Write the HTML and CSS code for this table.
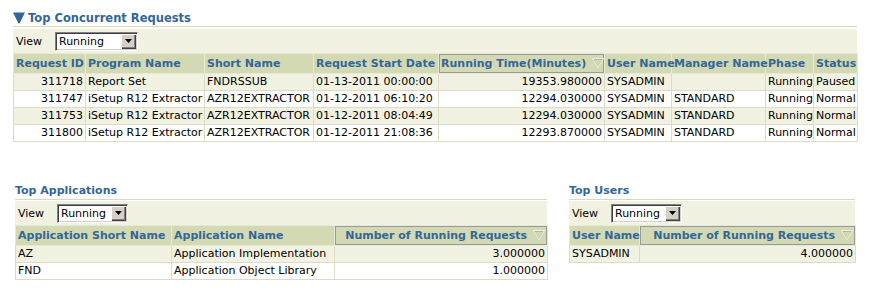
FILE: index.html
```html
<!DOCTYPE html>
<html>
<head>
    <title>Concurrent Requests</title>
    <link rel="stylesheet" href="styles.css">
</head>
<body>
    <div class="region">
        <h2 class="hdr"><svg class="disclose" width="12" height="12" viewBox="0 0 12 12"><path d="M0 0.5h12L6.5 11.5h-1z" fill="#336699"/></svg>Top Concurrent Requests</h2>
        <div class="bar">
            <label>View</label>
            <span class="select wide">Running<span class="btn"><svg width="7" height="4" viewBox="0 0 7 4"><path d="M0 0h7L3.5 4z" fill="#000"/></svg></span></span>
        </div>
        <table class="grid">
            <colgroup>
                <col style="width:72px"><col style="width:119px"><col style="width:109px"><col style="width:125px"><col style="width:166px"><col style="width:67px"><col style="width:94px"><col style="width:48px"><col style="width:44px">
            </colgroup>
            <tr>
                <th>Request ID</th><th>Program Name</th><th>Short Name</th><th>Request Start Date</th>
                <th class="sorted">Running Time(Minutes) <svg class="sort" width="12" height="10" viewBox="0 0 12 10"><path d="M1.5 1.5h9L6 9z" fill="none" stroke="#b4b898"/><path d="M0.5 0.5h11L6 9.5z" fill="none" stroke="#f0f0e4"/></svg></th>
                <th>User Name</th><th>Manager Name</th><th>Phase</th><th>Status</th>
            </tr>
            <tr class="odd">
                <td class="num">311718</td><td>Report Set</td><td>FNDRSSUB</td><td>01-13-2011 00:00:00</td><td class="num">19353.980000</td><td>SYSADMIN</td><td></td><td>Running</td><td>Paused</td>
            </tr>
            <tr>
                <td class="num">311747</td><td>iSetup R12 Extractor</td><td>AZR12EXTRACTOR</td><td>01-12-2011 06:10:20</td><td class="num">12294.030000</td><td>SYSADMIN</td><td>STANDARD</td><td>Running</td><td>Normal</td>
            </tr>
            <tr class="odd">
                <td class="num">311753</td><td>iSetup R12 Extractor</td><td>AZR12EXTRACTOR</td><td>01-12-2011 08:04:49</td><td class="num">12294.030000</td><td>SYSADMIN</td><td>STANDARD</td><td>Running</td><td>Normal</td>
            </tr>
            <tr>
                <td class="num">311800</td><td>iSetup R12 Extractor</td><td>AZR12EXTRACTOR</td><td>01-12-2011 21:08:36</td><td class="num">12293.870000</td><td>SYSADMIN</td><td>STANDARD</td><td>Running</td><td>Normal</td>
            </tr>
        </table>
    </div>

    <div class="lower">
        <div class="region apps">
            <h2 class="hdr sub">Top Applications</h2>
            <div class="bar">
                <label>View</label>
                <span class="select">Running<span class="btn"><svg width="7" height="4" viewBox="0 0 7 4"><path d="M0 0h7L3.5 4z" fill="#000"/></svg></span></span>
            </div>
            <table class="grid">
                <colgroup><col style="width:156px"><col style="width:163px"><col style="width:213px"></colgroup>
                <tr>
                    <th>Application Short Name</th><th>Application Name</th>
                    <th class="sorted">Number of Running Requests <svg class="sort" width="12" height="10" viewBox="0 0 12 10"><path d="M1.5 1.5h9L6 9z" fill="none" stroke="#b4b898"/><path d="M0.5 0.5h11L6 9.5z" fill="none" stroke="#f0f0e4"/></svg></th>
                </tr>
                <tr class="odd"><td>AZ</td><td>Application Implementation</td><td class="num">3.000000</td></tr>
                <tr><td>FND</td><td>Application Object Library</td><td class="num">1.000000</td></tr>
            </table>
        </div>
        <div class="region users">
            <h2 class="hdr sub">Top Users</h2>
            <div class="bar">
                <label>View</label>
                <span class="select">Running<span class="btn"><svg width="7" height="4" viewBox="0 0 7 4"><path d="M0 0h7L3.5 4z" fill="#000"/></svg></span></span>
            </div>
            <table class="grid">
                <colgroup><col style="width:70px"><col style="width:216px"></colgroup>
                <tr>
                    <th>User Name</th>
                    <th class="sorted">Number of Running Requests <svg class="sort" width="12" height="10" viewBox="0 0 12 10"><path d="M1.5 1.5h9L6 9z" fill="none" stroke="#b4b898"/><path d="M0.5 0.5h11L6 9.5z" fill="none" stroke="#f0f0e4"/></svg></th>
                </tr>
                <tr class="odd"><td>SYSADMIN</td><td class="num">4.000000</td></tr>
            </table>
        </div>
    </div>
</body>
</html>
```

FILE: styles.css
```css
body { margin: 0; padding: 0 13px; font-family: "DejaVu Sans", Tahoma, sans-serif; font-size: 11px; color: #000; background: #fff; }

.hdr { margin: 0; padding-top: 10px; height: 16px; line-height: 16px; display: flex; align-items: center; border-bottom: 1px solid #d8d9bc; color: #336699; font-size: 11.5px; font-weight: bold; }
.hdr.sub { padding-top: 0; font-size: 11px; }
.disclose { margin-right: 3px; }

.bar { margin-top: 2px; height: 24px; display: flex; align-items: center; padding-left: 3px; background: #f2f2e2; }
.sub + .bar { margin-top: 1px; }
.bar label { width: 39px; }

.select { display: flex; align-items: center; box-sizing: border-box; width: 71px; height: 19px; padding-left: 3px; border: 1px solid; border-color: #808080 #fff #fff #808080; box-shadow: inset 1px 1px 0 #404040, inset -1px -1px 0 #d4d0c8; background: #fff; }
.select.wide { width: 83px; }
.select .btn { margin: 0 1px 0 auto; width: 15px; height: 15px; display: flex; align-items: center; justify-content: center; box-sizing: border-box; background: #d4d0c8; box-shadow: inset 1px 1px 0 #fff, inset -1px -1px 0 #404040, inset -2px -2px 0 #808080; }

.grid { border-collapse: collapse; table-layout: fixed; width: 100%; font-size: inherit; }
.grid th { height: 19px; padding: 0 2px; text-align: left; white-space: nowrap; background: #d3d9b2; color: #336699; font-weight: bold; border: 1px solid #e8e8d6; }
.grid td { height: 16px; line-height: 16px; padding: 0 2px; white-space: nowrap; overflow: hidden; border: 1px solid #dcdcc6; }
.grid tr.odd td { background: #f2f2e2; }
.grid .num { text-align: right; }
.grid th.sorted { text-align: right; box-shadow: inset 0 0 0 1px #9a9a9a; }
.sort { vertical-align: -1px; margin-left: 2px; }

.lower { display: flex; margin-top: 41px; padding-left: 2px; }
.apps { width: 532px; }
.users { width: 286px; margin-left: 22px; }
```
